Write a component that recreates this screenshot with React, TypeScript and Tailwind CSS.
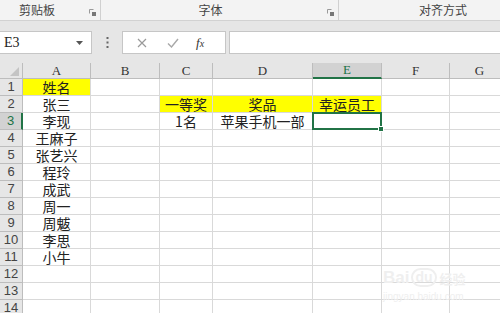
import React from "react";

const cols = [
  { key: "A", w: 68 },
  { key: "B", w: 69 },
  { key: "C", w: 53 },
  { key: "D", w: 100 },
  { key: "E", w: 69 },
  { key: "F", w: 68 },
  { key: "G", w: 60 },
];

const names = ["姓名", "张三", "李现", "王麻子", "张艺兴", "程玲", "成武", "周一", "周魃", "李思", "小牛", "", "", ""];

function cellContent(r: number, c: string): { text: string; yellow: boolean } {
  if (c === "A") return { text: names[r - 1] || "", yellow: r === 1 };
  if (r === 2 && c === "C") return { text: "一等奖", yellow: true };
  if (r === 2 && c === "D") return { text: "奖品", yellow: true };
  if (r === 2 && c === "E") return { text: "幸运员工", yellow: true };
  if (r === 3 && c === "C") return { text: "1名", yellow: false };
  if (r === 3 && c === "D") return { text: "苹果手机一部", yellow: false };
  return { text: "", yellow: false };
}

const cjk = { fontFamily: '"Noto Sans CJK SC", "Noto Sans", sans-serif' };

export default function App() {
  const rows = Array.from({ length: 14 }, (_, i) => i + 1);
  return (
    <div className="w-[500px] h-[313px] overflow-hidden bg-white relative" style={cjk}>
      {/* Ribbon group labels */}
      <div className="h-[21px] bg-[#f3f3f3] border-b border-[#d2d2d2] flex text-[12px] text-[#444] leading-[20px]">
        <div className="w-[101px] shrink-0 flex relative border-r border-[#d0d0d0]">
          <span className="ml-[19px]">剪贴板</span>
          <Launcher className="absolute left-[89px] top-[9px]" />
        </div>
        <div className="w-[238px] shrink-0 relative border-r border-[#d0d0d0] flex justify-center">
          <span className="mr-[18px]">字体</span>
          <Launcher className="absolute left-[226px] top-[9px]" />
        </div>
        <div className="flex-1 flex justify-center">
          <span className="ml-[47px]">对齐方式</span>
        </div>
      </div>
      {/* formula bar */}
      <div className="h-[42px] bg-[#e6e6e6] flex items-center pt-[1px]">
        <div className="w-[92px] shrink-0 h-[23px] bg-white border border-[#c6c6c6] border-l-0 flex items-center justify-between pl-[4px] pr-[8px]">
          <span className="text-[14px] text-[#222]" style={{ fontFamily: '"Liberation Serif", serif' }}>E3</span>
          <svg width="7" height="4" viewBox="0 0 7 4"><path d="M0 0H7L3.5 4Z" fill="#555" /></svg>
        </div>
        <div className="w-[30px] shrink-0 flex justify-center">
          <svg width="3" height="11" viewBox="0 0 3 11">
            <rect x="0.5" y="0" width="2" height="2" fill="#666" />
            <rect x="0.5" y="4.5" width="2" height="2" fill="#666" />
            <rect x="0.5" y="9" width="2" height="2" fill="#666" />
          </svg>
        </div>
        <div className="w-[104px] shrink-0 h-[23px] bg-white border border-[#c6c6c6] flex items-center">
          <svg className="ml-[14px]" width="10" height="10" viewBox="0 0 10 10"><path d="M1 1L9 9M9 1L1 9" stroke="#9a9a9a" strokeWidth="1.2" /></svg>
          <svg className="ml-[20px]" width="12" height="10" viewBox="0 0 12 10"><path d="M1 5.5L4.5 9L11 1" stroke="#a8a8a8" strokeWidth="1.4" fill="none" /></svg>
          <span className="ml-[17px] text-[13px] italic text-[#333]" style={{ fontFamily: '"Liberation Serif", serif' }}>f<span className="text-[10px]">x</span></span>
        </div>
        <div className="ml-[3px] flex-1 h-[23px] bg-white border border-[#c6c6c6] border-r-0" />
      </div>
      {/* grid */}
      <div className="flex flex-col">
        <div className="flex h-[16px] bg-[#e6e6e6]">
          <div className="w-[23px] shrink-0 border-r border-b border-[#bdbdbd] relative">
            <svg className="absolute right-[3px] bottom-[2px]" width="9" height="9" viewBox="0 0 9 9"><path d="M9 0V9H0Z" fill="#c4c4c4" /></svg>
          </div>
          {cols.map((c) =>
            c.key === "E" ? (
              <div key={c.key} className="h-[16px] shrink-0 bg-[#d2d2d2] border-r border-[#bdbdbd] border-b-2 border-b-[#217346] flex items-center justify-center text-[13px] text-[#217346]" style={{ width: c.w, fontFamily: '"Liberation Serif", serif' }}>
                {c.key}
              </div>
            ) : (
              <div key={c.key} className="h-[16px] shrink-0 border-r border-b border-[#bdbdbd] flex items-center justify-center text-[13px] text-[#333]" style={{ width: c.w, fontFamily: '"Liberation Serif", serif' }}>
                {c.key}
              </div>
            )
          )}
        </div>
        {rows.map((r) => (
          <div key={r} className="flex h-[17px]">
            <div
              className={
                r === 3
                  ? "w-[23px] shrink-0 bg-[#d2d2d2] border-r-2 border-r-[#217346] border-b border-[#bdbdbd] flex items-center justify-center text-[13px] text-[#217346]"
                  : "w-[23px] shrink-0 bg-[#e6e6e6] border-r border-b border-[#bdbdbd] flex items-center justify-center text-[13px] text-[#444]"
              }
              style={{ fontFamily: '"Liberation Sans", sans-serif' }}
            >
              {r}
            </div>
            {cols.map((c) => {
              const { text, yellow } = cellContent(r, c.key);
              const selected = r === 3 && c.key === "E";
              return (
                <div
                  key={c.key}
                  className={
                    (yellow ? "bg-[#ffff00] " : "") +
                    "relative shrink-0 border-r border-b border-[#d9d9d9] flex items-center justify-center text-[14px] leading-[17px] text-[#222] whitespace-nowrap overflow-visible"
                  }
                  style={{ width: c.w }}
                >
                  {text}
                  {selected && (
                    <div className="absolute z-10 left-[-1px] top-[-1px] right-[-1px] bottom-[-1px] border-2 border-[#217346]">
                      <div className="absolute right-[-4px] bottom-[-4px] w-[6px] h-[6px] bg-[#217346] border border-white" />
                    </div>
                  )}
                </div>
              );
            })}
          </div>
        ))}
      </div>
      {/* watermark */}
      <div className="absolute left-[383px] top-[268px] flex flex-col items-start pointer-events-none select-none">
        <div className="flex items-end text-[#efefef] font-bold" style={{ fontFamily: '"Liberation Sans", sans-serif' }}>
          <span className="text-[17px] leading-[18px]">Bai</span>
          <span className="text-[14px] leading-[15px] ml-[2px] px-[2px] rounded-full border-2 border-[#efefef]">du</span>
          <span className="text-[13px] leading-[16px] ml-[3px]" style={cjk}>经验</span>
        </div>
        <div className="text-[10px] text-[#efefef] mt-[2px]" style={{ fontFamily: '"Liberation Sans", sans-serif' }}>jingyan.baidu.com</div>
      </div>
    </div>
  );
}

function Launcher({ className }: { className?: string }) {
  return (
    <svg className={className} width="7" height="7" viewBox="0 0 7 7">
      <path d="M0.5 0.5H4.5M0.5 0.5V4.5" stroke="#999" strokeWidth="1" fill="none" />
      <rect x="3" y="3" width="4" height="4" fill="#777" />
    </svg>
  );
}
